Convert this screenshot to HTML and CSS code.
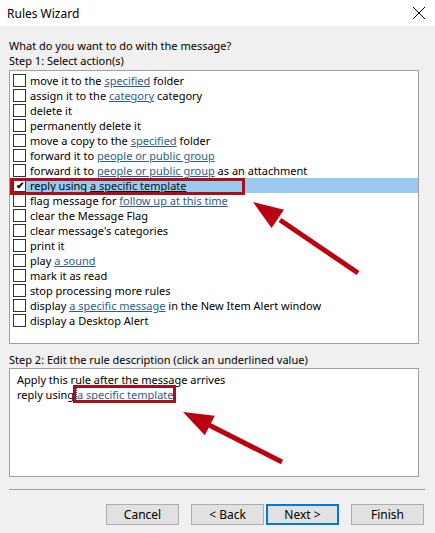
FILE: index.html
```html
<!DOCTYPE html>
<html lang="en">

<head>
  <meta charset="UTF-8">
  <meta name="viewport" content="width=device-width, initial-scale=1.0">
  <title>Rules Wizard</title>
  <link rel="stylesheet" href="styles.css">
</head>

<body>
  <div class="window">
    <div class="titlebar">
      <span class="title">Rules Wizard</span>
      <svg class="close" width="14" height="14" viewBox="0 0 14 14">
        <path d="M1 1 L13 13 M13 1 L1 13" stroke="#000" stroke-width="1" fill="none"/>
      </svg>
    </div>

    <div class="content">
      <p class="label">What do you want to do with the message?</p>
      <p class="label">Step 1: Select action(s)</p>

      <ul class="actions">
        <li><span class="box"></span>move it to the <a href="#">specified</a> folder</li>
        <li><span class="box"></span>assign it to the <a href="#">category</a> category</li>
        <li><span class="box"></span>delete it</li>
        <li><span class="box"></span>permanently delete it</li>
        <li><span class="box"></span>move a copy to the <a href="#">specified</a> folder</li>
        <li><span class="box"></span>forward it to <a href="#">people or public group</a></li>
        <li><span class="box"></span>forward it to <a href="#">people or public group</a> as an attachment</li>
        <li class="selected"><span class="box checked">&#10004;</span>reply using <a href="#">a specific template</a></li>
        <li><span class="box"></span>flag message for <a href="#">follow up at this time</a></li>
        <li><span class="box"></span>clear the Message Flag</li>
        <li><span class="box"></span>clear message's categories</li>
        <li><span class="box"></span>print it</li>
        <li><span class="box"></span>play <a href="#">a sound</a></li>
        <li><span class="box"></span>mark it as read</li>
        <li><span class="box"></span>stop processing more rules</li>
        <li><span class="box"></span>display <a href="#">a specific message</a> in the New Item Alert window</li>
        <li><span class="box"></span>display a Desktop Alert</li>
      </ul>

      <p class="label step2">Step 2: Edit the rule description (click an underlined value)</p>
      <div class="desc">
        <p>Apply this rule after the message arrives</p>
        <p>reply using <a href="#" class="focused">a specific template</a></p>
      </div>

      <div class="separator"></div>

      <div class="buttons">
        <button>Cancel</button>
        <button class="back">&lt; Back</button>
        <button class="default">Next &gt;</button>
        <button class="finish">Finish</button>
      </div>
    </div>

    <!-- red annotations drawn on top of the dialog -->
    <svg class="annotations" width="435" height="533" viewBox="0 0 435 533">
      <rect x="11.5" y="179.5" width="232" height="14" fill="none" stroke="#a8101c" stroke-width="3"/>
      <rect x="74.5" y="386.5" width="100" height="15" fill="none" stroke="#a8101c" stroke-width="3"/>

      <line x1="280" y1="220" x2="358" y2="273" stroke="#bb0010" stroke-width="5"/>
      <polygon points="253,202 271.6,227.9 284,209.7" fill="#bb0010"/>

      <line x1="207" y1="424" x2="282" y2="462" stroke="#bb0010" stroke-width="5"/>
      <polygon points="183,412 204.8,435.3 214.8,415.7" fill="#bb0010"/>
    </svg>
  </div>
</body>

</html>
```

FILE: styles.css
```css
body {
  margin: 0;
  font-family: 'Noto Sans', 'Segoe UI', sans-serif;
  font-size: 11px;
  color: #000;
  background-color: #f0f0f0;
}

.window {
  position: relative;
  width: 435px;
  height: 533px;
  background-color: #f0f0f0;
  overflow: hidden;
}

.titlebar {
  height: 26px;
  background-color: #fff;
  display: flex;
  align-items: center;
  justify-content: space-between;
  padding: 0 9px 0 7px;
}

.title {
  font-size: 12px;
}

.content {
  padding: 12px 10px 0 9px;
}

.label {
  margin: 0;
  line-height: 15px;
}

.actions {
  list-style: none;
  margin: 2px 0 0;
  padding: 2px 0 0 1px;
  width: 410px;
  height: 274px;
  box-sizing: border-box;
  background-color: #fff;
  border: 1px solid #a0a0a0;
}

.actions li {
  height: 15px;
  line-height: 15px;
  padding-left: 2px;
  white-space: nowrap;
}

.actions li.selected {
  background-color: #99c9ef;
}

.actions li.selected a {
  color: #111;
}

.box {
  display: inline-block;
  vertical-align: top;
  width: 11px;
  height: 11px;
  margin-top: 1px;
  border: 1px solid #333;
  background-color: #fff;
  margin-right: 4px;
  font-size: 10px;
  line-height: 11px;
  text-align: center;
  color: #000;
}

.box.checked {
  font-weight: bold;
}

a {
  color: #2e5d8e;
  text-decoration: underline;
}

.step2 {
  margin-top: 8px;
  margin-bottom: 1px;
}

.desc {
  width: 410px;
  height: 109px;
  box-sizing: border-box;
  background-color: #fff;
  border: 1px solid #a0a0a0;
  padding: 3px 7px;
}

.desc p {
  margin: 0;
  line-height: 15px;
}

.desc a.focused {
  outline: 1px dotted #333;
}

.separator {
  width: 416px;
  height: 1px;
  background-color: #a0a0a0;
  margin-top: 12px;
}

.buttons {
  display: flex;
  justify-content: flex-end;
  margin-top: 14px;
  padding-right: 1px;
}

button {
  width: 73px;
  height: 21px;
  font-family: inherit;
  font-size: 12px;
  background-color: #e1e1e1;
  border: 1px solid #adadad;
  padding: 0;
  color: #000;
}

button.back {
  margin-left: 12px;
}

button.default {
  margin-left: 2px;
  border: 2px solid #0078d7;
}

button.finish {
  margin-left: 12px;
}

.annotations {
  position: absolute;
  left: 0;
  top: 0;
  pointer-events: none;
}
```
